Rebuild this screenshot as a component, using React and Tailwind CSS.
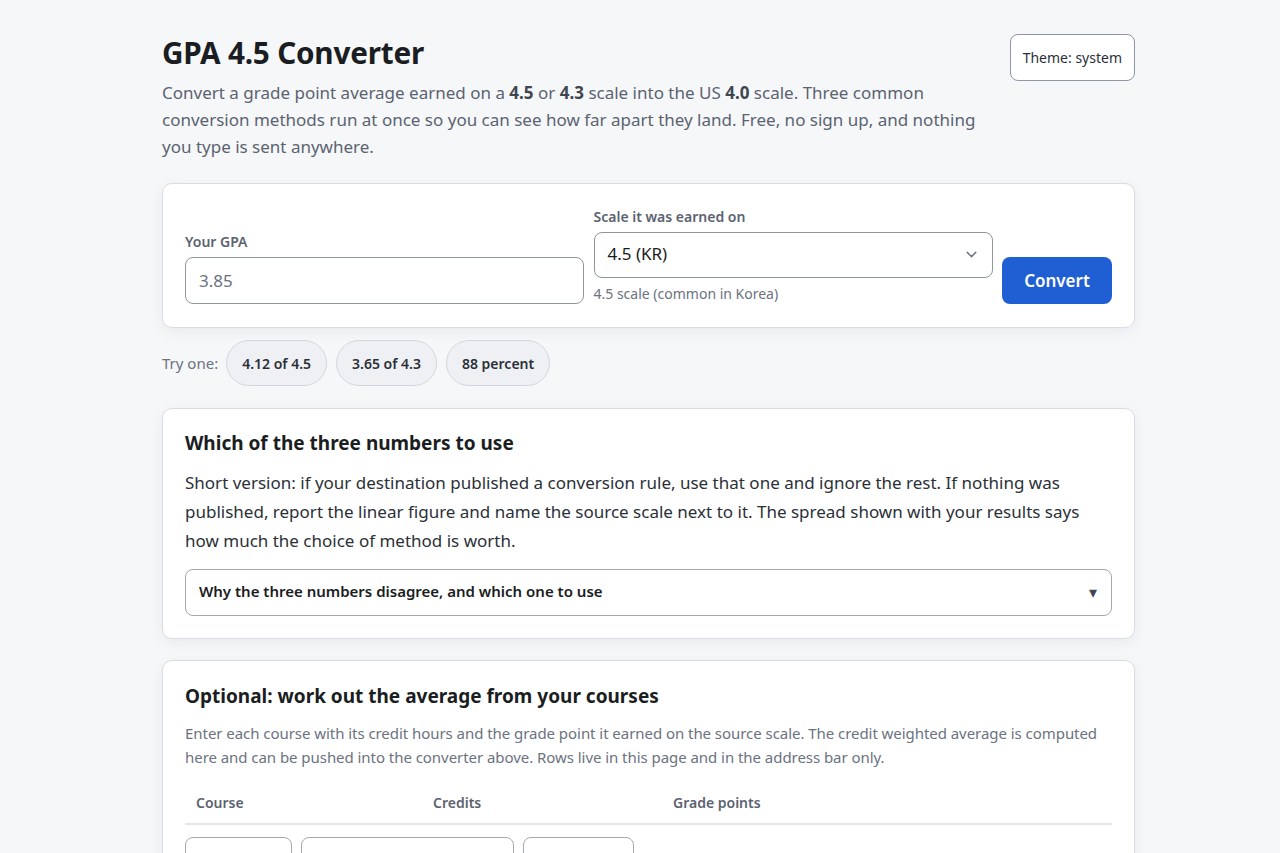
import React from 'react'
import { ChevronDown } from 'lucide-react'

const chips = ['4.12 of 4.5', '3.65 of 4.3', '88 percent']

const App = () => {
    return (
        <div className="min-h-screen bg-[#f6f7f9] text-[#1a1d21]" style={{ fontFamily: '"Noto Sans", "Open Sans", sans-serif' }}>
            <div className="ml-[162px] w-[973px] pt-[34px] pb-10">
                {/* header */}
                <div className="flex items-start justify-between">
                    <div className="max-w-[830px]">
                        <h1 className="text-[29.7px] leading-[38px] font-bold tracking-[-0.2px]">GPA 4.5 Converter</h1>
                        <p className="mt-[7px] text-[17px] leading-[27px] text-[#5b6370]">
                            Convert a grade point average earned on a <b className="text-[#3f4650]">4.5</b> or <b className="text-[#3f4650]">4.3</b> scale into the US <b className="text-[#3f4650]">4.0</b> scale. Three common conversion methods run at once so you can see how far apart they land. Free, no sign up, and nothing you type is sent anywhere.
                        </p>
                    </div>
                    <button className="h-[47px] px-[12px] rounded-lg border border-[#8e96a3] bg-white text-[14px] text-[#2b3038]">Theme: system</button>
                </div>

                {/* converter card */}
                <div className="mt-[23px] bg-white border border-[#d9dde3] rounded-[10px] shadow-[0_4px_14px_rgba(20,30,50,0.06)] px-[22px] pt-[23px] pb-[23px]">
                    <div className="flex items-end gap-[9.5px]">
                        <div className="flex-1">
                            <label className="block text-[14px] leading-[20px] font-semibold text-[#5b6370] mb-[5px]">Your GPA</label>
                            <input className="w-full h-[47px] rounded-lg border border-[#8e96a3] px-[13px] text-[17px] text-[#2b3038] placeholder:text-[#6b7280] outline-none" placeholder="3.85" />
                        </div>
                        <div className="flex-1">
                            <label className="block text-[14px] leading-[20px] font-semibold text-[#5b6370] mb-[5px]">Scale it was earned on</label>
                            <div className="relative h-[46px] rounded-lg border border-[#8e96a3] flex items-center px-[13px] pb-[3px] text-[17px] text-[#1a1d21]">
                                4.5 (KR)
                                <ChevronDown className="absolute right-[12px] top-[13px] text-[#6b7280]" size={17} strokeWidth={2} />
                            </div>
                            <div className="mt-[6px] text-[14px] leading-[20px] text-[#6b7280]">4.5 scale (common in Korea)</div>
                        </div>
                        <button className="w-[110px] h-[47px] rounded-lg bg-[#1f5fd3] text-white text-[17px] font-semibold">Convert</button>
                    </div>
                </div>

                {/* try one */}
                <div className="mt-[12px] flex items-center gap-[9px]">
                    <span className="text-[15px] text-[#6b7280] -mr-[1px]">Try one:</span>
                    {chips.map((c) => (
                        <button key={c} className="h-[46px] px-[15px] rounded-full bg-[#eef0f3] border border-[#d3d7dd] text-[14px] font-semibold text-[#2b3038]">{c}</button>
                    ))}
                </div>

                {/* which to use */}
                <div className="mt-[22px] bg-white border border-[#d9dde3] rounded-[10px] shadow-[0_4px_14px_rgba(20,30,50,0.06)] px-[22px] pt-[21px] pb-[22px]">
                    <h2 className="text-[19px] leading-[26px] font-bold">Which of the three numbers to use</h2>
                    <p className="mt-[12px] text-[17px] leading-[29px] text-[#2b3038]">
                        Short version: if your destination published a conversion rule, use that one and ignore the rest. If nothing was published, report the linear figure and name the source scale next to it. The spread shown with your results says how much the choice of method is worth.
                    </p>
                    <div className="mt-[14px] h-[47px] rounded-lg border border-[#a2a9b4] flex items-center justify-between pl-[13px] pr-[14px] pb-[2px]">
                        <span className="text-[15px] font-semibold text-[#1a1d21]">Why the three numbers disagree, and which one to use</span>
                        <span className="text-[16px] text-[#3f4650]">▾</span>
                    </div>
                </div>

                {/* courses */}
                <div className="mt-[21px] bg-white border border-[#d9dde3] rounded-[10px] shadow-[0_4px_14px_rgba(20,30,50,0.06)] px-[22px] pt-[22px] pb-[22px]">
                    <h2 className="text-[19px] leading-[26px] font-bold">Optional: work out the average from your courses</h2>
                    <p className="mt-[12px] text-[15px] leading-[24px] text-[#6b7280] tracking-[-0.05px]">
                        Enter each course with its credit hours and the grade point it earned on the source scale. The credit weighted average is computed here and can be pushed into the converter above. Rows live in this page and in the address bar only.
                    </p>
                    <div className="mt-[13px] grid grid-cols-[237px_240px_1fr] border-b-2 border-[#e3e6ea] text-[14px] font-semibold text-[#5b6370]">
                        <div className="px-[11px] py-[10px]">Course</div>
                        <div className="px-[11px] py-[10px]">Credits</div>
                        <div className="px-[11px] py-[10px]">Grade points</div>
                    </div>
                    <div className="mt-[12px] flex gap-[9px]">
                        <input className="w-[107px] h-[46px] rounded-lg border border-[#a2a9b4] px-3 outline-none" />
                        <input className="w-[213px] h-[46px] rounded-lg border border-[#a2a9b4] px-3 outline-none" />
                        <input className="w-[111px] h-[46px] rounded-lg border border-[#a2a9b4] px-3 outline-none" />
                    </div>
                </div>
            </div>
        </div>
    )
}

export default App
